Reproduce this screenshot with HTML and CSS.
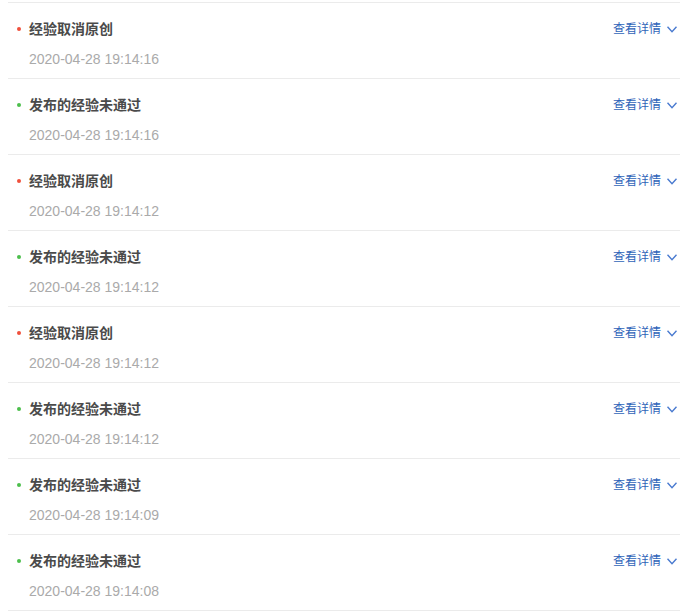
FILE: index.html
```html
<!DOCTYPE html>
<html lang="zh-CN">
<head>
  <meta charset="UTF-8">
  <title>消息列表</title>
  <link rel="stylesheet" href="styles.css">
</head>
<body>
  <ul class="msg-list">
    <li class="msg red">
      <div class="msg-head"><span class="msg-title">经验取消原创</span><a class="msg-more" href="#">查看详情<svg viewBox="0 0 10 7" width="10" height="7"><path d="M0.5 0.8 L5 5.8 L9.5 0.8" fill="none" stroke="currentColor" stroke-width="1.4"/></svg></a></div>
      <div class="msg-time">2020-04-28 19:14:16</div>
    </li>
    <li class="msg green">
      <div class="msg-head"><span class="msg-title">发布的经验未通过</span><a class="msg-more" href="#">查看详情<svg viewBox="0 0 10 7" width="10" height="7"><path d="M0.5 0.8 L5 5.8 L9.5 0.8" fill="none" stroke="currentColor" stroke-width="1.4"/></svg></a></div>
      <div class="msg-time">2020-04-28 19:14:16</div>
    </li>
    <li class="msg red">
      <div class="msg-head"><span class="msg-title">经验取消原创</span><a class="msg-more" href="#">查看详情<svg viewBox="0 0 10 7" width="10" height="7"><path d="M0.5 0.8 L5 5.8 L9.5 0.8" fill="none" stroke="currentColor" stroke-width="1.4"/></svg></a></div>
      <div class="msg-time">2020-04-28 19:14:12</div>
    </li>
    <li class="msg green">
      <div class="msg-head"><span class="msg-title">发布的经验未通过</span><a class="msg-more" href="#">查看详情<svg viewBox="0 0 10 7" width="10" height="7"><path d="M0.5 0.8 L5 5.8 L9.5 0.8" fill="none" stroke="currentColor" stroke-width="1.4"/></svg></a></div>
      <div class="msg-time">2020-04-28 19:14:12</div>
    </li>
    <li class="msg red">
      <div class="msg-head"><span class="msg-title">经验取消原创</span><a class="msg-more" href="#">查看详情<svg viewBox="0 0 10 7" width="10" height="7"><path d="M0.5 0.8 L5 5.8 L9.5 0.8" fill="none" stroke="currentColor" stroke-width="1.4"/></svg></a></div>
      <div class="msg-time">2020-04-28 19:14:12</div>
    </li>
    <li class="msg green">
      <div class="msg-head"><span class="msg-title">发布的经验未通过</span><a class="msg-more" href="#">查看详情<svg viewBox="0 0 10 7" width="10" height="7"><path d="M0.5 0.8 L5 5.8 L9.5 0.8" fill="none" stroke="currentColor" stroke-width="1.4"/></svg></a></div>
      <div class="msg-time">2020-04-28 19:14:12</div>
    </li>
    <li class="msg green">
      <div class="msg-head"><span class="msg-title">发布的经验未通过</span><a class="msg-more" href="#">查看详情<svg viewBox="0 0 10 7" width="10" height="7"><path d="M0.5 0.8 L5 5.8 L9.5 0.8" fill="none" stroke="currentColor" stroke-width="1.4"/></svg></a></div>
      <div class="msg-time">2020-04-28 19:14:09</div>
    </li>
    <li class="msg green">
      <div class="msg-head"><span class="msg-title">发布的经验未通过</span><a class="msg-more" href="#">查看详情<svg viewBox="0 0 10 7" width="10" height="7"><path d="M0.5 0.8 L5 5.8 L9.5 0.8" fill="none" stroke="currentColor" stroke-width="1.4"/></svg></a></div>
      <div class="msg-time">2020-04-28 19:14:08</div>
    </li>
  </ul>
</body>
</html>
```

FILE: styles.css
```css
body {
  margin: 0;
  background: #fff;
  font-family: "Liberation Sans", "Noto Sans CJK SC", sans-serif;
}
.msg-list {
  list-style: none;
  margin: 2px 20px 0 8px;
  padding: 0;
  border-top: 1px solid #ebebeb;
}
.msg {
  position: relative;
  padding: 16px 3px 0 21px;
  height: 59px;
  border-bottom: 1px solid #ebebeb;
}
.msg::before {
  content: "";
  position: absolute;
  left: 9px;
  top: 24px;
  width: 4px;
  height: 4px;
  border-radius: 50%;
}
.msg.red::before {
  background: #f0503c;
}
.msg.green::before {
  background: #4cbf4c;
}
.msg-head {
  display: flex;
  justify-content: space-between;
  align-items: center;
  height: 20px;
}
.msg-title {
  font-size: 14px;
  font-weight: bold;
  color: #4a4a4a;
  line-height: 20px;
}
.msg-more {
  display: flex;
  align-items: center;
  gap: 6px;
  font-size: 12px;
  color: #2f64b9;
  text-decoration: none;
  line-height: 16px;
}
.msg-more svg {
  color: #4a7bd0;
}
.msg-time {
  margin-top: 10px;
  font-size: 14px;
  line-height: 20px;
  color: #aaa;
}
```
